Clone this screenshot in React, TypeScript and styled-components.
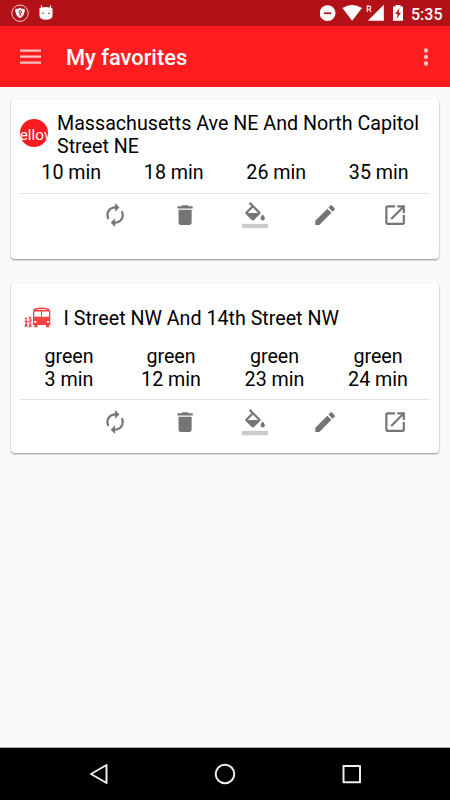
import React from "react";
import styled, { createGlobalStyle } from "styled-components";

const GlobalStyle = createGlobalStyle`
  * { box-sizing: border-box; }
  html, body { margin: 0; padding: 0; }
  body { background: #fafafa; font-family: Roboto, sans-serif; color: #000; }
  svg { display: block; flex: none; }
`;

const Screen = styled.div`
  width: 450px;
  height: 800px;
  display: flex;
  flex-direction: column;
  background: #fafafa;
  overflow: hidden;
`;

const StatusBar = styled.header`
  height: 26px;
  flex: none;
  display: flex;
  align-items: center;
  justify-content: space-between;
  padding: 0 8px 0 11px;
  background: #b21217;
  color: #fff;
`;

const StatusGroup = styled.div<{ $gap: number }>`
  display: flex;
  align-items: center;
  gap: ${(p) => p.$gap}px;
`;

const Clock = styled.span`
  font-size: 16px;
  line-height: 20px;
  font-weight: 500;
  width: 31px;
  white-space: nowrap;
  padding-top: 3px;
`;

const AppBar = styled.div`
  height: 61px;
  flex: none;
  display: flex;
  align-items: center;
  padding: 0 13px 0 17px;
  background: #ff1d20;
  border-bottom: 1px solid #f3181b;
  color: #fff;
`;

const Title = styled.h1`
  flex: 1;
  margin: 0 0 0 22px;
  padding-top: 4px;
  font-size: 21.85px;
  line-height: 26px;
  font-weight: 500;
`;

const Content = styled.main`
  flex: 1;
  display: flex;
  flex-direction: column;
  gap: 24px;
  padding: 12px 11px 0;
`;

const Card = styled.article<{ $height: number; $top: number }>`
  height: ${(p) => p.$height}px;
  padding: ${(p) => p.$top}px 9px 0;
  display: flex;
  flex-direction: column;
  background: #fff;
  border-radius: 4px;
  box-shadow: 0 1px 2px rgba(0, 0, 0, 0.34), 0 1px 2px rgba(0, 0, 0, 0.12);
`;

const CardHead = styled.div<{ $gap: number; $height: number }>`
  display: flex;
  align-items: center;
  gap: ${(p) => p.$gap}px;
  height: ${(p) => p.$height}px;
`;

const StopName = styled.h2`
  margin: 0;
  font-size: 19.66px;
  line-height: 23px;
  font-weight: 400;
`;

const LineBadge = styled.div`
  width: 28px;
  height: 28px;
  flex: none;
  display: flex;
  align-items: center;
  justify-content: center;
  margin-bottom: 4px;
  overflow: hidden;
  border-radius: 50%;
  background: #fb1a20;
  color: #fff;
  font-size: 15.3px;
  line-height: 18px;
  white-space: nowrap;
  padding-top: 4px;
`;

const Times = styled.div<{ $top: number; $columns: string }>`
  display: grid;
  grid-template-columns: ${(p) => p.$columns};
  margin-top: ${(p) => p.$top}px;
  font-size: 19.66px;
  line-height: 23px;
  text-align: center;
`;

const TimeCell = styled.div`
  display: flex;
  flex-direction: column;
`;

const Divider = styled.hr<{ $top: number }>`
  width: 410px;
  height: 1px;
  flex: none;
  margin: ${(p) => p.$top}px 0 0;
  border: 0;
  background: #e4e4e4;
`;

const Actions = styled.div<{ $top: number }>`
  display: flex;
  gap: 43.8px;
  padding: ${(p) => p.$top}px 0 0 82.3px;
`;

const ActionButton = styled.button`
  width: 26.2px;
  height: 26.2px;
  padding: 0;
  border: 0;
  background: none;
  color: #757575;
`;

const BusSlot = styled.div`
  margin-left: 4px;
`;

const NavBar = styled.nav`
  height: 53px;
  flex: none;
  display: flex;
  align-items: center;
  justify-content: space-between;
  padding: 0 88px;
  border-top: 1px solid #a8a8a8;
  background: #000;
`;

const actionIcons: { label: string; shape: React.ReactNode }[] = [
  {
    label: "Refresh",
    shape: (
      <path d="M12 6v3l4-4-4-4v3c-4.42 0-8 3.58-8 8 0 1.57.46 3.03 1.24 4.26L6.7 14.8c-.45-.83-.7-1.79-.7-2.8 0-3.31 2.69-6 6-6zm6.76 1.74L17.3 9.2c.44.84.7 1.79.7 2.8 0 3.31-2.69 6-6 6v-3l-4 4 4 4v-3c4.42 0 8-3.58 8-8 0-1.57-.46-3.03-1.24-4.26z" />
    ),
  },
  {
    label: "Delete",
    shape: <path d="M6 19c0 1.1.9 2 2 2h8c1.1 0 2-.9 2-2V7H6v12zM19 4h-3.500l-1-1h-5l-1 1H5v2h14V4z" />,
  },
  {
    label: "Color",
    shape: (
      <>
        <path d="M16.56 8.94L7.62 0 6.210 1.410l2.380 2.380-5.150 5.150c-.59.59-.59 1.540 0 2.120l5.500 5.500c.29.29.68.44 1.060.44s.77-.15 1.060-.44l5.500-5.500c.59-.58.59-1.530 0-2.120zM5.210 10L10 5.210 14.790 10H5.210zM19 11.500s-2 2.170-2 3.500c0 1.100.9 2 2 2s2-.9 2-2c0-1.330-2-3.500-2-3.500z" />
        <path fill="#cbcbcb" d="M0 20h24v4H0z" />
      </>
    ),
  },
  {
    label: "Edit",
    shape: (
      <path d="M3 17.250V21h3.750L17.810 9.940l-3.750-3.750L3 17.250zM20.710 7.040c.39-.39.39-1.020 0-1.410l-2.340-2.340c-.39-.39-1.020-.39-1.410 0l-1.830 1.830 3.750 3.750 1.830-1.830z" />
    ),
  },
  {
    label: "Open",
    shape: (
      <path d="M19 19H5V5h7V3H5c-1.110 0-2 .9-2 2v14c0 1.100.89 2 2 2h14c1.100 0 2-.9 2-2v-7h-2v7zM14 3v2h3.590l-9.830 9.830 1.410 1.410L19 6.410V10h2V3h-7z" />
    ),
  },
];

const CardActions = ({ top }: { top: number }) => (
  <Actions $top={top}>
    {actionIcons.map((a) => (
      <ActionButton key={a.label} aria-label={a.label}>
        <svg width="26.2" height="26.2" viewBox="0 0 24 24" fill="currentColor">
          {a.shape}
        </svg>
      </ActionButton>
    ))}
  </Actions>
);

const BusIcon = () => (
  <svg width="27.5" height="22" viewBox="0 0 27.5 22" fill="#fb4246">
    <path
      fillRule="evenodd"
      d="M10 1.700Q17.500 -.5 25 1.700L26.300 4V18H25.200V20.300H22V18H13.500V20.300H10.300V18H9V4zM10.300 4.400V9.800H17V4.400zM18 4.400V9.800H25V4.400zM13 1.900V2.700H22.500V1.900zM10.200 14V15.700H12.300V14zM23 14V15.700H25.100V14z"
    />
    <circle cx="2" cy="11.500" r="1.100" />
    <circle cx="6" cy="10.700" r="1.200" />
    <path
      d="M2.200 12.500V16.500L1 20M2.300 16.500L3.200 20M.5 14.500H3.700M6.200 12V16.500L5 20.500M6.200 16.500L7.300 20M4.300 15L8 12.800"
      fill="none"
      stroke="#fb4246"
      strokeWidth="1.200"
    />
  </svg>
);

export default function App() {
  return (
    <>
      <GlobalStyle />
      <Screen>
        <StatusBar>
          <StatusGroup $gap={10}>
            <svg width="18" height="18" viewBox="0 0 18 18">
              <circle cx="9" cy="9.200" r="8.200" fill="none" stroke="#f0c8c9" strokeWidth="1" />
              <path d="M9 3.800Q11 5 13.800 5Q14 11.500 9 14.200Q4 11.500 4.200 5Q7 5 9 3.800z" fill="#fff" />
              <circle cx="9.300" cy="7.800" r="1.300" fill="none" stroke="#b21217" strokeWidth="1" />
              <path d="M9.200 9V12" stroke="#b21217" strokeWidth="1" />
            </svg>
            <svg width="14" height="18" viewBox="0 0 14 18">
              <path
                d="M2.200 .5L3.500 3.600Q7 2.600 10.500 3.600L11.800 .5L12.400 4.300H13.500V12Q13 15.800 7 15.800T.5 12V4.300H1.600z"
                fill="#fff"
              />
              <circle cx="4" cy="9.300" r=".8" fill="#b21217" />
              <circle cx="10" cy="9.300" r=".8" fill="#b21217" />
            </svg>
          </StatusGroup>
          <StatusGroup $gap={0}>
            <svg width="91" height="26" viewBox="0 0 91 26" fill="#fff">
              <circle cx="7.600" cy="13.200" r="7.900" />
              <path d="M3.900 12.400h7.400v1.700H3.900z" fill="#b21217" />
              <path d="M22.400 8Q32 2 42 8L32.100 20.800z" />
              <path d="M63.800 4.800V20.800H47.800z" />
              <path
                d="M47.200 12V6.100H49.200Q50.800 6.100 50.800 7.700T49.200 9.300H47.200M49.300 9.300L50.900 12"
                fill="none"
                stroke="#fff"
                strokeWidth="1.100"
              />
              <path d="M73 6.600H75.500V5H80.500V6.600H83V20.800H73z" />
              <path d="M79.500 8L75.200 14H77.700L76.500 19L81 12.800H78.500z" fill="#b21217" />
            </svg>
            <Clock>5:35</Clock>
          </StatusGroup>
        </StatusBar>

        <AppBar>
          <svg width="27" height="27" viewBox="0 0 27 27" fill="#ffc0c1">
            <path d="M3 6.500h21v2.300H3zM3 12.500h21v2.300H3zM3 18.500h21v2.300H3z" />
          </svg>
          <Title>My favorites</Title>
          <svg width="22" height="27" viewBox="0 0 22 27" fill="#ffc0c1">
            <circle cx="11" cy="7.500" r="2.200" />
            <circle cx="11" cy="14" r="2.200" />
            <circle cx="11" cy="20.500" r="2.200" />
          </svg>
        </AppBar>

        <Content>
          <Card $height={160} $top={13}>
            <CardHead $gap={9} $height={46}>
              <LineBadge>yellow</LineBadge>
              <StopName>Massachusetts Ave NE And North Capitol Street NE</StopName>
            </CardHead>
            <Times $top={3} $columns="repeat(4, 102.5px)">
              {["10 min", "18 min", "26 min", "35 min"].map((t) => (
                <TimeCell key={t}>{t}</TimeCell>
              ))}
            </Times>
            <Divider $top={9} />
            <CardActions top={8.4} />
          </Card>

          <Card $height={169.5} $top={12}>
            <CardHead $gap={12} $height={46}>
              <BusSlot>
                <BusIcon />
              </BusSlot>
              <StopName>I Street NW And 14th Street NW</StopName>
            </CardHead>
            <Times $top={4} $columns="98px 106px 101px 106px">
              {["3 min", "12 min", "23 min", "24 min"].map((t) => (
                <TimeCell key={t}>
                  <span>green</span>
                  <span>{t}</span>
                </TimeCell>
              ))}
            </Times>
            <Divider $top={8} />
            <CardActions top={9.4} />
          </Card>
        </Content>

        <NavBar>
          <svg width="22" height="24" viewBox="0 0 22 24" fill="none" stroke="#eee" strokeWidth="2" strokeLinejoin="round">
            <path d="M18.500 3V21L3 12z" />
          </svg>
          <svg width="24" height="24" viewBox="0 0 24 24" fill="none" stroke="#eee" strokeWidth="2">
            <circle cx="12" cy="12" r="9.300" />
          </svg>
          <svg width="22" height="24" viewBox="0 0 22 24" fill="none" stroke="#eee" strokeWidth="2" strokeLinejoin="round">
            <path d="M3.500 4H20V20.300H3.500z" />
          </svg>
        </NavBar>
      </Screen>
    </>
  );
}
